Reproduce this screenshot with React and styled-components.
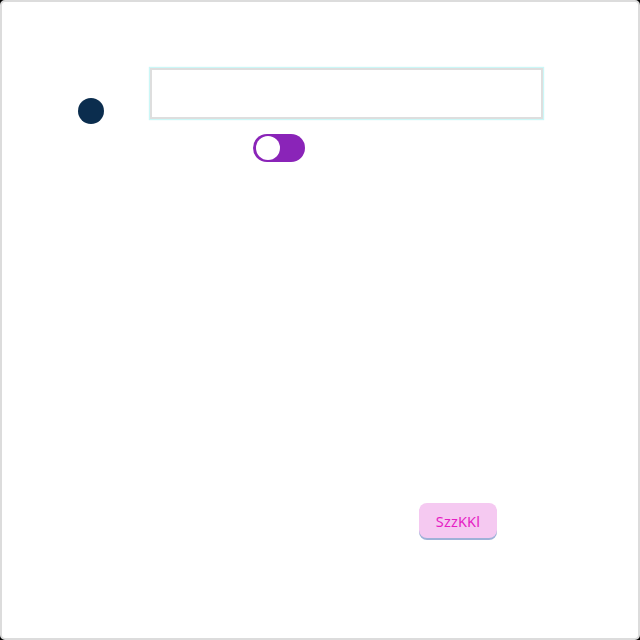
import React, { useState } from "react";
import styled, { createGlobalStyle } from "styled-components";

const Global = createGlobalStyle`
  html, body { margin: 0; padding: 0; background: #000; }
  * { box-sizing: border-box; }
`;

const Frame = styled.div`
  width: 640px;
  height: 640px;
  background: #fff;
  border: 2px solid #dcdcdc;
  border-radius: 5px;
  display: flex;
  flex-direction: column;
  align-items: flex-start;
  padding-top: 66px;
  font-family: "Open Sans", "Noto Sans", sans-serif;
`;

const TopRow = styled.div`
  display: flex;
  align-items: flex-start;
  gap: 46px;
  padding-left: 76px;
  height: 51px;
`;

const Dot = styled.div`
  width: 26px;
  height: 26px;
  border-radius: 50%;
  background: #0b2d4e;
  margin-top: 30px;
`;

const Field = styled.input`
  width: 393px;
  height: 51px;
  border: 2px solid #dedede;
  box-shadow: 0 0 1px 1px rgba(160, 240, 240, 0.55);
  background: #fff;
  outline: none;
  padding: 0 12px;
  font: inherit;
`;

const Toggle = styled.button`
  width: 52px;
  height: 28px;
  border-radius: 14px;
  border: none;
  padding: 2px;
  margin: 15px 0 0 251px;
  background: #8a24b8;
  display: flex;
  justify-content: ${(p) => (p.$on ? "flex-end" : "flex-start")};
  align-items: center;
  cursor: pointer;
`;

const Knob = styled.span`
  width: 24px;
  height: 24px;
  border-radius: 50%;
  background: #fff;
  margin-left: 1px;
`;

const Action = styled.button`
  margin: 341px 0 0 417px;
  width: 78px;
  height: 35px;
  border: none;
  border-radius: 8px;
  background: #f5c9f1;
  color: #e61ec4;
  font-family: "Noto Sans", "Open Sans", sans-serif;
  font-size: 14.5px;
  letter-spacing: 0.2px;
  box-shadow: 0 2px 0 #9fb1d8;
  cursor: pointer;
`;

export default function App() {
  const [on, setOn] = useState(false);
  return (
    <>
      <Global />
      <Frame>
        <TopRow>
          <Dot />
          <Field />
        </TopRow>
        <Toggle $on={on} onClick={() => setOn(!on)}>
          <Knob />
        </Toggle>
        <Action>SzzKKl</Action>
      </Frame>
    </>
  );
}
